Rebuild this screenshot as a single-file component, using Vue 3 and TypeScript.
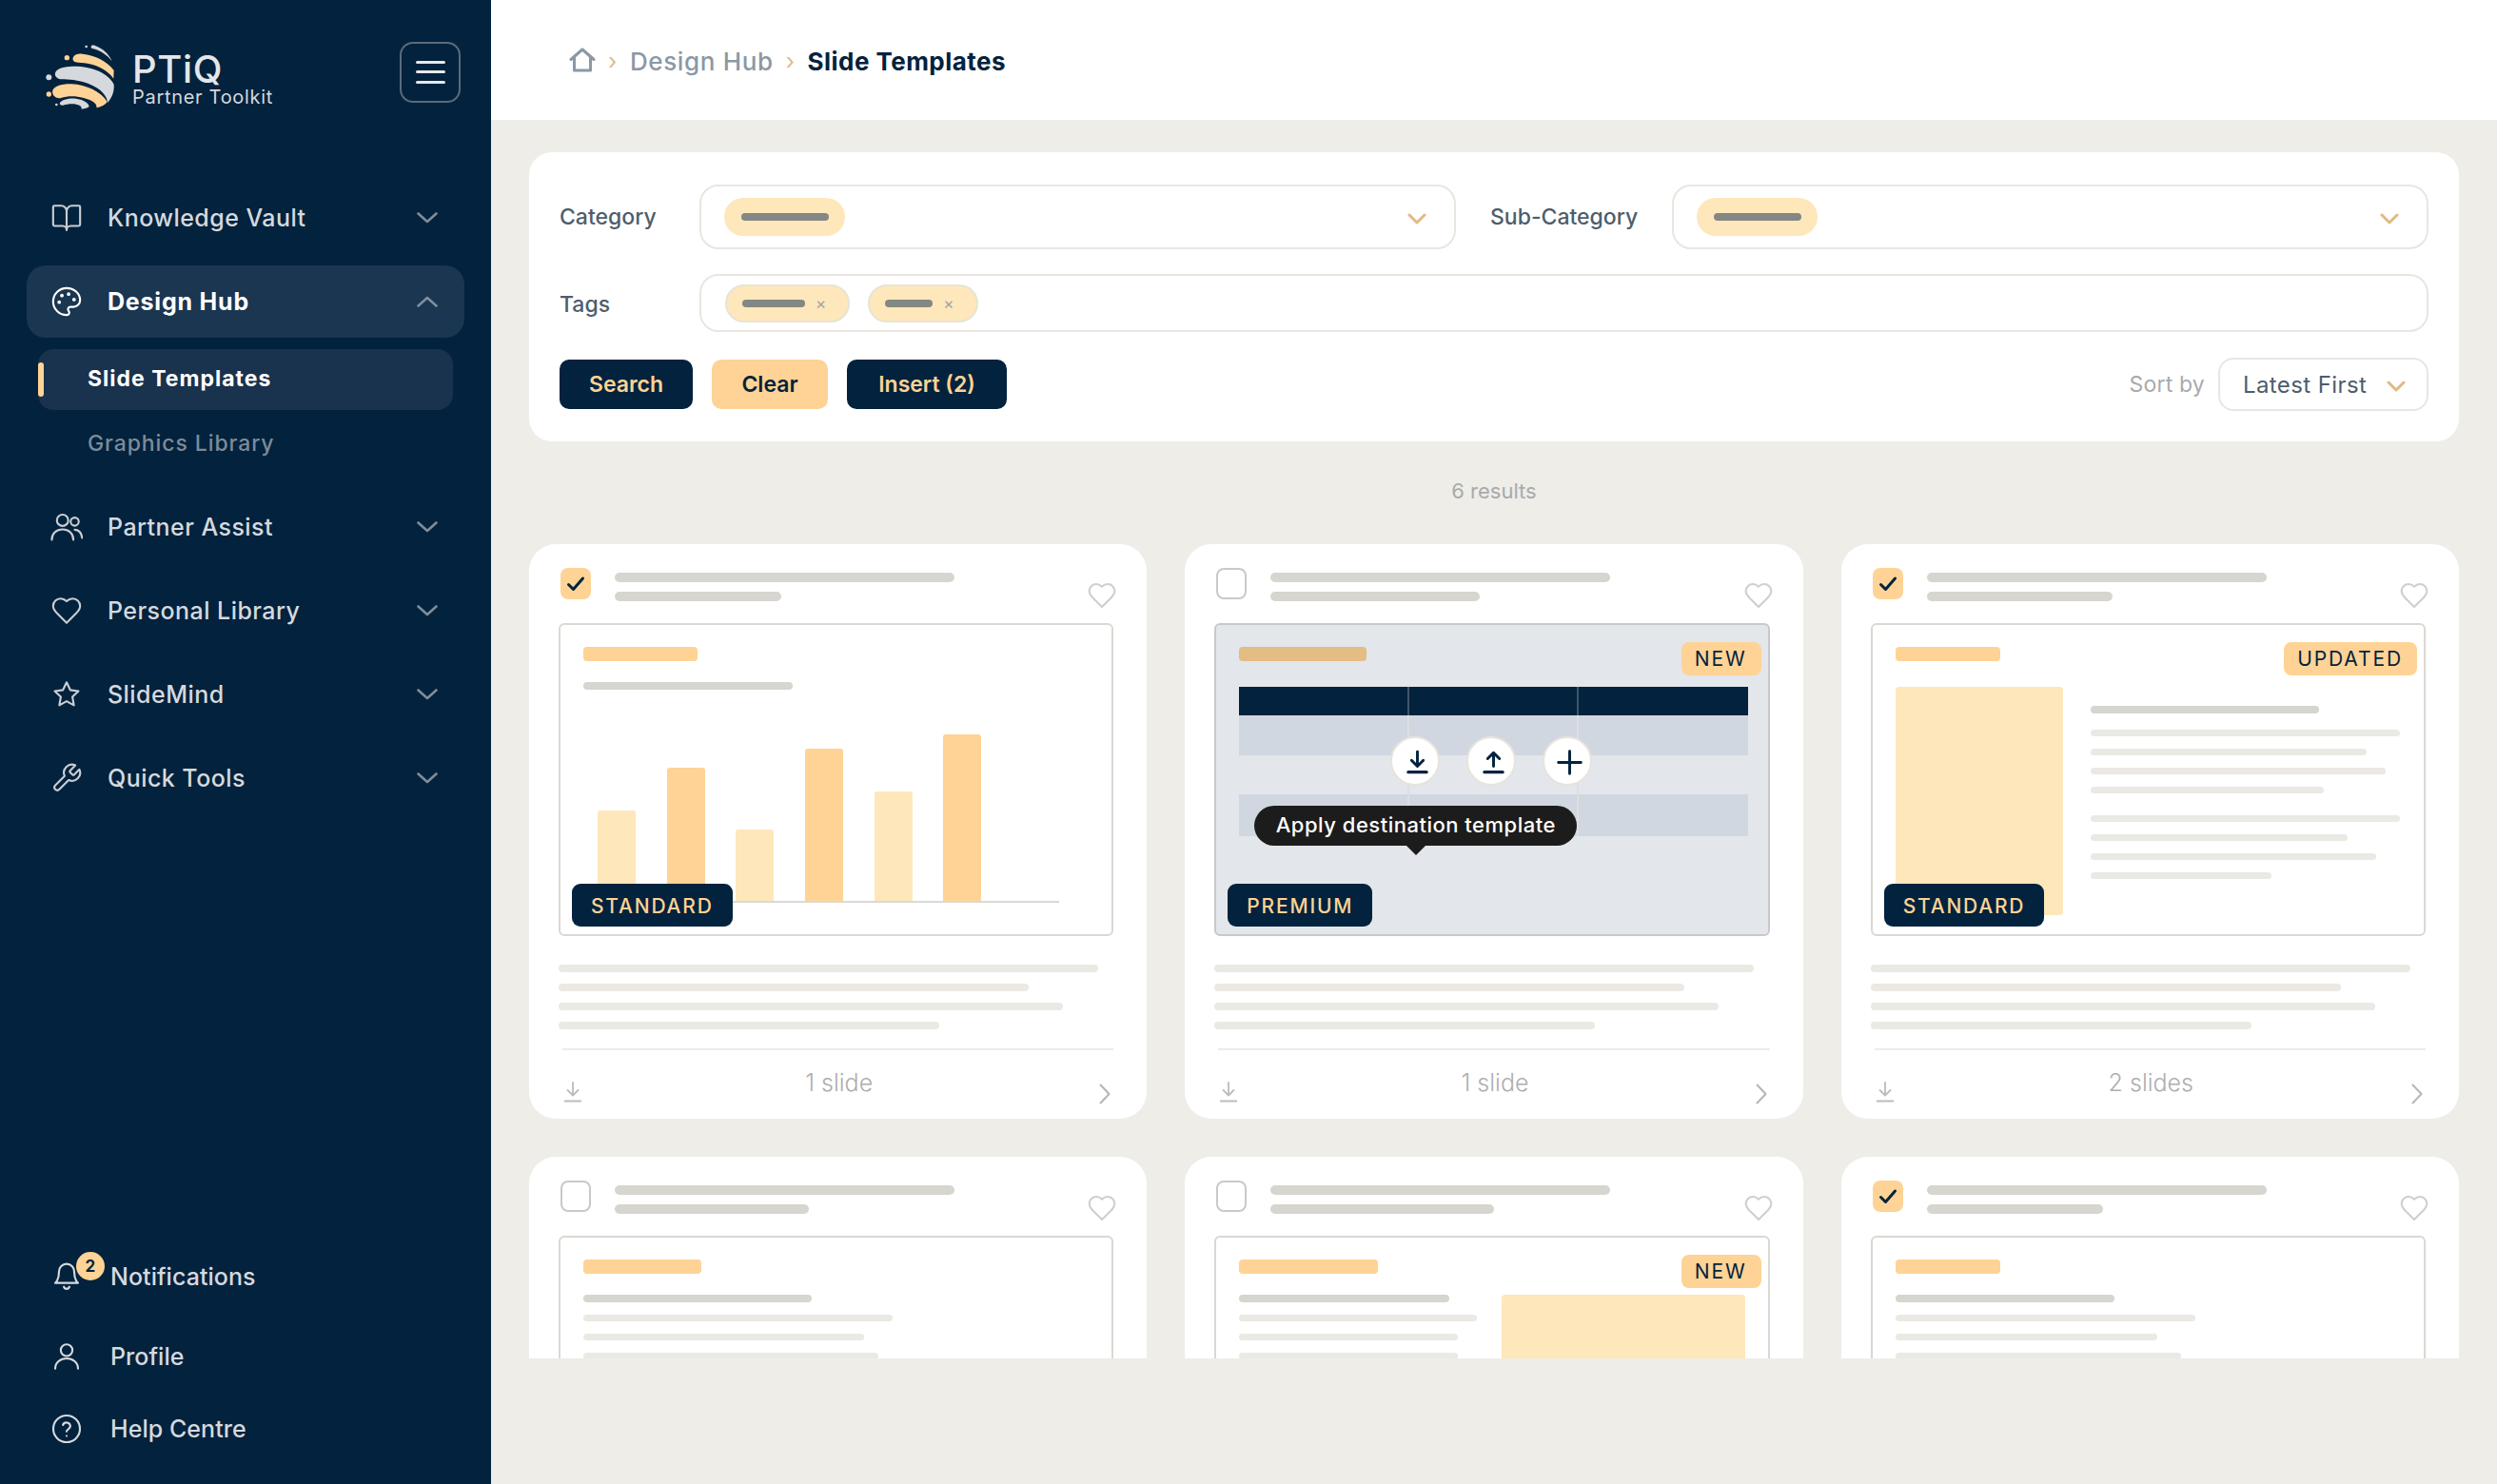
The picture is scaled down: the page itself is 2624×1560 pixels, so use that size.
<script setup lang="ts">
import { computed } from 'vue';

interface NavItem { label: string; icon: string; open?: boolean }
interface Card {
  checked: boolean;
  titleW: number[];
  kind: 'chart' | 'table' | 'doc' | 'text' | 'split';
  accentW: number;
  corner?: string;
  tier?: string;
  slides?: string;
  grayW?: number;
  lineW?: number[];
  picW?: number;
}

const topNav: NavItem[] = [
  { label: 'Knowledge Vault', icon: 'book' },
  { label: 'Design Hub', icon: 'palette', open: true },
  { label: 'Partner Assist', icon: 'users' },
  { label: 'Personal Library', icon: 'heart' },
  { label: 'SlideMind', icon: 'star' },
  { label: 'Quick Tools', icon: 'wrench' },
];

const bars = [
  { h: 95, light: true },
  { h: 140, light: false },
  { h: 75, light: true },
  { h: 160, light: false },
  { h: 115, light: true },
  { h: 175, light: false },
];

// second row is cut off by the scroll area, so those cards have no footer
const cards: Card[] = [
  { checked: true, titleW: [357, 175], kind: 'chart', accentW: 120, tier: 'STANDARD', slides: '1 slide', grayW: 220 },
  { checked: false, titleW: [357, 220], kind: 'table', accentW: 134, corner: 'NEW', tier: 'PREMIUM', slides: '1 slide' },
  { checked: true, titleW: [357, 195], kind: 'doc', accentW: 110, corner: 'UPDATED', tier: 'STANDARD', slides: '2 slides' },
  { checked: false, titleW: [357, 204], kind: 'text', accentW: 124, grayW: 240, lineW: [325, 295, 310, 250] },
  { checked: false, titleW: [357, 235], kind: 'split', accentW: 146, corner: 'NEW', grayW: 221, lineW: [250, 230, 230], picW: 256 },
  { checked: true, titleW: [357, 185], kind: 'text', accentW: 110, grayW: 230, lineW: [315, 275, 300, 240] },
];

const docBlocks = [
  [325, 290, 310, 245],
  [325, 270, 300, 190],
];

const footLines = [567, 494, 530, 400];

const resultLabel = computed(() => `${cards.length} results`);
</script>

<template>
  <div class="app">
    <aside class="sidebar">
      <div class="brand">
        <svg class="logo" viewBox="50 50 225 210" aria-hidden="true">
          <circle cx="120" cy="94" r="8" fill="#fed395" />
          <circle cx="181" cy="59" r="4" fill="#d5d8dc" />
          <circle cx="63" cy="156" r="9" fill="#d5d8dc" />
          <circle cx="63" cy="209" r="8" fill="#fed395" />
          <circle cx="87" cy="242" r="4" fill="#d5d8dc" />
          <path d="M196 58c2-4 8-4 13-2 24 9 42 24 53 49-15-19-35-33-59-39-5-1-8-4-7-8z" fill="#d5d8dc" />
          <path d="M139 94c4-10 16-14 30-12 40 5 78 22 99 52l-1 26c-14-22-46-42-82-48-14-2-28-2-38-4-6-2-10-8-8-14z" fill="#fed395" />
          <path d="M83 142c4-12 20-18 46-20 58-4 118 16 139 56 2 22-6 42-20 58 0-18-18-44-60-60-34-12-64-14-84-14-12 0-24-8-21-20z" fill="#d5d8dc" />
          <path d="M75 197c5-13 28-21 60-20 46 2 92 24 112 56-5 8-16 15-34 19 4-12-12-24-40-31-26-7-52-6-72 0-12 3-30-6-26-24z" fill="#fed395" />
          <path d="M98 236c8-10 32-16 54-12 20 3 36 12 38 24-4 4-14 7-24 8 2-9-10-16-30-16-10 0-20 2-28 4-6 1-13-2-10-8z" fill="#d5d8dc" />
        </svg>
        <div class="brand-text">
          <div class="brand-name">PTiQ</div>
          <div class="brand-sub">Partner Toolkit</div>
        </div>
        <button class="burger" aria-label="Menu">
          <span></span><span></span><span></span>
        </button>
      </div>

      <nav class="nav">
        <template v-for="item in topNav" :key="item.label">
          <div class="nav-row" :class="{ open: item.open }">
            <svg class="nav-icon" viewBox="0 0 24 24">
              <template v-if="item.icon === 'book'">
                <path d="M12 7v14" />
                <path d="M3 18a1 1 0 0 1-1-1V4a1 1 0 0 1 1-1h5a4 4 0 0 1 4 4 4 4 0 0 1 4-4h5a1 1 0 0 1 1 1v13a1 1 0 0 1-1 1h-6a3 3 0 0 0-3 3 3 3 0 0 0-3-3z" />
              </template>
              <template v-else-if="item.icon === 'palette'">
                <path d="M12 22a1 1 0 0 1 0-20 10 9 0 0 1 10 9 5 5 0 0 1-5 5h-2.25a1.75 1.75 0 0 0-1.4 2.8l.3.4a1.75 1.75 0 0 1-1.4 2.8z" />
                <circle cx="13.5" cy="6.5" r=".6" />
                <circle cx="17.5" cy="10.5" r=".6" />
                <circle cx="6.5" cy="12.5" r=".6" />
                <circle cx="8.5" cy="7.5" r=".6" />
              </template>
              <template v-else-if="item.icon === 'users'">
                <circle cx="9" cy="7" r="4.2" />
                <circle cx="18" cy="8" r="3" />
                <path d="M1 21.5c0-4.6 3.4-7.7 8-7.7s8 3.1 8 7.7" />
                <path d="M18 14c3 0 5 2.5 5.5 6" />
              </template>
              <path v-else-if="item.icon === 'heart'" d="M19 14c1.49-1.46 3-3.21 3-5.5A5.5 5.5 0 0 0 16.5 3c-1.76 0-3 .5-4.5 2-1.5-1.5-2.74-2-4.5-2A5.5 5.5 0 0 0 2 8.5c0 2.3 1.5 4.05 3 5.5l7 7Z" />
              <path v-else-if="item.icon === 'star'" d="M12 3l2.7 5.7 6.1.8-4.5 4.3 1.1 6.2-5.4-3-5.4 3 1.1-6.2-4.5-4.3 6.1-.8z" />
              <path v-else d="M14.7 6.3a1 1 0 0 0 0 1.4l1.6 1.6a1 1 0 0 0 1.4 0l3.77-3.77a6 6 0 0 1-7.94 7.94l-6.91 6.91a2.12 2.12 0 0 1-3-3l6.91-6.91a6 6 0 0 1 7.94-7.94l-3.76 3.76z" />
            </svg>
            <span class="nav-label">{{ item.label }}</span>
            <svg class="nav-chev" viewBox="0 0 22 12"><path :d="item.open ? 'M1.5 10.5 11 2l9.5 8.5' : 'M1.5 1.5 11 10l9.5-8.5'" /></svg>
          </div>
          <div v-if="item.open" class="subnav">
            <div class="sub-row active"><i class="sub-mark"></i>Slide Templates</div>
            <div class="sub-row">Graphics Library</div>
          </div>
        </template>
      </nav>

      <div class="nav-bottom">
        <div class="bottom-row notif">
          <span class="bell-wrap">
            <svg class="bottom-icon" viewBox="0 0 24 24">
              <path d="M6 8a6 6 0 0 1 12 0c0 7 3 9 3 9H3s3-2 3-9" />
              <path d="M9.8 20a2.3 2.3 0 0 0 4.4 0" />
            </svg>
            <b class="bell-badge">2</b>
          </span>
          <span>Notifications</span>
        </div>
        <div class="bottom-row profile">
          <svg class="bottom-icon" viewBox="0 0 24 24">
            <circle cx="12" cy="7" r="4.6" />
            <path d="M3 21.5c0-4.8 4-8 9-8s9 3.2 9 8" />
          </svg>
          <span>Profile</span>
        </div>
        <div class="bottom-row help">
          <svg class="bottom-icon" viewBox="0 0 24 24">
            <circle cx="12" cy="12" r="10.5" />
            <path d="M9.1 9a3 3 0 0 1 5.8 1c0 2-2.9 2.6-2.9 4" />
            <path d="M12 17.6h.01" />
          </svg>
          <span>Help Centre</span>
        </div>
      </div>
    </aside>

    <main class="main">
      <header class="topbar">
        <svg class="home" viewBox="0 0 28 26"><path d="M2 12.5 14 2l12 10.5" /><path d="M5.5 10v14h17V10" /></svg>
        <span class="crumb-sep">›</span>
        <span class="crumb">Design Hub</span>
        <span class="crumb-sep">›</span>
        <span class="crumb current">Slide Templates</span>
      </header>

      <div class="content">
        <section class="filters">
          <div class="filter-row">
            <label class="flabel">Category</label>
            <div class="select">
              <span class="pill"><i></i></span>
              <svg class="chev" viewBox="0 0 20 12"><path d="M2 2l8 8 8-8" /></svg>
            </div>
            <label class="flabel sub">Sub-Category</label>
            <div class="select">
              <span class="pill"><i></i></span>
              <svg class="chev" viewBox="0 0 20 12"><path d="M2 2l8 8 8-8" /></svg>
            </div>
          </div>
          <div class="filter-row tags-row">
            <label class="flabel">Tags</label>
            <div class="tags">
              <span class="tag"><i class="w1"></i><em>×</em></span>
              <span class="tag"><i class="w2"></i><em>×</em></span>
            </div>
          </div>
          <div class="actions">
            <button class="btn dark search">Search</button>
            <button class="btn light">Clear</button>
            <button class="btn dark insert">Insert (2)</button>
            <span class="sort-label">Sort by</span>
            <div class="sort">
              <span>Latest First</span>
              <svg class="chev" viewBox="0 0 20 12"><path d="M2 2l8 8 8-8" /></svg>
            </div>
          </div>
        </section>

        <div class="results">{{ resultLabel }}</div>

        <section class="grid">
          <article v-for="(card, i) in cards" :key="i" class="card">
            <div class="card-head">
              <span class="check" :class="{ on: card.checked }">
                <svg v-if="card.checked" viewBox="0 0 20 20"><path d="M2.5 10.5 7.5 15.5 17.5 4" /></svg>
              </span>
              <div class="card-title">
                <i :style="{ width: card.titleW[0] + 'px' }"></i>
                <i :style="{ width: card.titleW[1] + 'px' }"></i>
              </div>
              <svg class="fav" viewBox="0 0 24 24"><path d="M19 14c1.49-1.46 3-3.21 3-5.5A5.5 5.5 0 0 0 16.5 3c-1.76 0-3 .5-4.5 2-1.5-1.5-2.74-2-4.5-2A5.5 5.5 0 0 0 2 8.5c0 2.3 1.5 4.05 3 5.5l7 7Z" /></svg>
            </div>

            <div class="thumb" :class="{ hover: card.kind === 'table' }">
              <div class="accent" :style="{ width: card.accentW + 'px' }"></div>

              <template v-if="card.kind === 'chart'">
                <div class="ln gray chart-title" :style="{ width: card.grayW + 'px' }"></div>
                <div class="chart">
                  <div v-for="(b, n) in bars" :key="n" class="bar" :class="{ pale: b.light }" :style="{ height: b.h + 'px' }"></div>
                </div>
              </template>

              <template v-else-if="card.kind === 'table'">
                <div class="table">
                  <div class="t-row t-head"><span></span><span></span><span></span></div>
                  <div class="t-row t-band"><span></span><span></span><span></span></div>
                  <div class="t-row t-plain"><span></span><span></span><span></span></div>
                  <div class="t-row t-band last"><span></span><span></span><span></span></div>
                </div>
                <div class="hover-actions">
                  <button class="round">
                    <svg viewBox="0 0 24 24"><path d="M12 2v13M6.5 10l5.5 5.5 5.500-5.500" /><path class="thick" d="M3.5 21h17" /></svg>
                  </button>
                  <button class="round">
                    <svg viewBox="0 0 24 24"><path d="M12 15.5V3M6.5 8.5 12 3l5.500 5.500" /><path class="thick" d="M3.5 21h17" /></svg>
                  </button>
                  <button class="round">
                    <svg viewBox="0 0 24 24"><path d="M12 1.5v21M1.5 12h21" /></svg>
                  </button>
                </div>
                <div class="tooltip">Apply destination template</div>
              </template>

              <div v-else-if="card.kind === 'doc'" class="doc">
                <div class="doc-pic"></div>
                <div class="doc-lines">
                  <div class="ln gray" style="width: 240px"></div>
                  <div v-for="(block, b) in docBlocks" :key="b" class="doc-block">
                    <div v-for="w in block" :key="w" class="ln" :style="{ width: w + 'px' }"></div>
                  </div>
                </div>
              </div>

              <div v-else-if="card.kind === 'split'" class="split">
                <div class="split-lines">
                  <div class="ln gray" :style="{ width: card.grayW + 'px' }"></div>
                  <div v-for="w in card.lineW" :key="w" class="ln" :style="{ width: w + 'px' }"></div>
                </div>
                <div class="split-pic" :style="{ width: card.picW + 'px' }"></div>
              </div>

              <div v-else class="plain">
                <div class="ln gray" :style="{ width: card.grayW + 'px' }"></div>
                <div v-for="w in card.lineW" :key="w" class="ln" :style="{ width: w + 'px' }"></div>
              </div>

              <span v-if="card.corner" class="corner">{{ card.corner }}</span>
              <span v-if="card.tier" class="tier">{{ card.tier }}</span>
            </div>

            <div class="desc">
              <i v-for="w in footLines" :key="w" :style="{ width: w + 'px' }"></i>
            </div>
            <div v-if="card.slides" class="card-foot">
              <svg class="dl" viewBox="0 0 18 22"><path d="M9 1v13M3.5 9 9 14.5 14.5 9" /><path d="M0 20.5h18" /></svg>
              <span class="slides">{{ card.slides }}</span>
              <svg class="go" viewBox="0 0 12 22"><path d="M1.5 1.5 10.5 11l-9 9.500" /></svg>
            </div>
          </article>
        </section>
      </div>
    </main>
  </div>
</template>

<style>
html, body { margin: 0; background: #eeede8; }
</style>

<style scoped>
* { box-sizing: border-box; }
.app {
  display: flex;
  width: 2624px;
  height: 1560px;
  overflow: hidden;
  font-family: Inter, "Noto Sans", sans-serif;
  background: #eeede8;
}

/* sidebar */
.sidebar {
  width: 516px;
  flex: none;
  display: flex;
  flex-direction: column;
  background: #02223d;
  color: #d5d9de;
}
.brand {
  display: flex;
  align-items: center;
  height: 63px;
  margin-top: 44px;
  padding-left: 47px;
}
.logo { width: 75px; height: 70px; flex: none; margin-top: 10px; }
.brand-text { margin-left: 17px; width: 281px; margin-top: 16px; }
.brand-name {
  font-size: 40px;
  line-height: 36px;
  font-weight: 500;
  letter-spacing: .6px;
  color: #e4e6e9;
}
.brand-sub {
  font-size: 20px;
  line-height: 22px;
  letter-spacing: .7px;
  color: #d5d9de;
}
.burger {
  flex: none;
  width: 64px;
  height: 64px;
  display: flex;
  flex-direction: column;
  align-items: center;
  justify-content: center;
  gap: 7.5px;
  background: none;
  border: 2px solid #5a6b7b;
  border-radius: 14px;
  padding: 0;
}
.burger span { width: 31px; height: 3px; background: #e6e8ea; border-radius: 2px; }

.nav {
  display: flex;
  flex-direction: column;
  margin-top: 84px;
  padding: 0 28px;
  gap: 12px;
}
.nav-row {
  display: flex;
  align-items: center;
  height: 76px;
  width: 460px;
  padding-left: 25px;
  border-radius: 20px;
  font-size: 25px;
  font-weight: 500;
  letter-spacing: .45px;
}
.nav-row.open { background: #1a3650; color: #fff; font-weight: 700; letter-spacing: .8px; }
.nav-icon {
  width: 34px;
  height: 34px;
  flex: none;
  fill: none;
  stroke: #c9cdd2;
  stroke-width: 1.5;
  stroke-linecap: round;
  stroke-linejoin: round;
}
.open .nav-icon { stroke: #fff; }
.nav-label { margin-left: 26px; flex: 1; }
.nav-chev {
  width: 22px;
  height: 12px;
  margin-right: 28px;
  fill: none;
  stroke: #7f8d9a;
  stroke-width: 2.6;
  stroke-linecap: round;
  stroke-linejoin: round;
}
.subnav {
  display: flex;
  flex-direction: column;
  gap: 2px;
  padding-left: 12px;
  margin-bottom: 7px;
}
.sub-row {
  position: relative;
  display: flex;
  align-items: center;
  width: 436px;
  height: 64px;
  padding: 2px 0 0 52px;
  font-size: 23px;
  font-weight: 500;
  letter-spacing: .9px;
  color: #7d8b99;
}
.sub-row.active {
  background: #19324d;
  border-radius: 16px;
  color: #fff;
  font-weight: 700;
  letter-spacing: 1px;
  padding: 0 0 3px 52px;
}
.sub-mark {
  position: absolute;
  left: 0;
  top: 14px;
  width: 6px;
  height: 36px;
  border-radius: 3px;
  background: #fed395;
}

.nav-bottom { margin-top: auto; padding: 0 0 30px 54px; }
.bottom-row {
  display: flex;
  align-items: center;
  height: 56px;
  font-size: 25px;
  font-weight: 500;
  letter-spacing: .05px;
  color: #d5d9de;
}
.bottom-row.profile { margin-top: 28px; }
.bottom-row.help { margin-top: 20px; }
.bottom-row > span:last-child { margin-left: 30px; }
.bottom-icon {
  width: 32px;
  height: 32px;
  flex: none;
  fill: none;
  stroke: #d5d9de;
  stroke-width: 1.6;
  stroke-linecap: round;
  stroke-linejoin: round;
}
.bell-wrap { position: relative; display: flex; flex: none; }
.bell-badge {
  position: absolute;
  left: 26px;
  top: -10px;
  width: 30px;
  height: 30px;
  border-radius: 50%;
  background: #fed395;
  color: #02223d;
  font-size: 17px;
  line-height: 30px;
  text-align: center;
}

/* main */
.main { flex: 1; min-width: 0; display: flex; flex-direction: column; }
.topbar {
  flex: none;
  height: 126px;
  background: #fff;
  display: flex;
  align-items: center;
  padding: 3px 0 0 82px;
  font-size: 26px;
  font-weight: 500;
  letter-spacing: .65px;
}
.home {
  width: 28px;
  height: 26px;
  margin-top: -3px;
  fill: none;
  stroke: #8b98a5;
  stroke-width: 3;
  stroke-linejoin: round;
  stroke-linecap: round;
}
.crumb-sep { color: #dfba82; margin: 0 13px; font-size: 24px; font-weight: 400; }
.crumb { color: #8b98a5; }
.crumb.current { color: #02223d; font-weight: 700; letter-spacing: .45px; }

.content {
  height: 1302px;
  overflow: hidden;
  padding: 34px 40px 0;
}
.filters {
  background: #fff;
  border-radius: 24px;
  padding: 34px 32px 32px;
  height: 304px;
}
.filter-row { display: flex; align-items: center; height: 68px; }
.flabel {
  width: 147px;
  flex: none;
  font-size: 23px;
  font-weight: 500;
  color: #4e5d6c;
}
.flabel.sub { width: 191px; margin-left: 36px; }
.select {
  flex: 1;
  height: 68px;
  display: flex;
  align-items: center;
  justify-content: space-between;
  padding: 0 29px 0 24px;
  border: 2px solid #e9e6e0;
  border-radius: 20px;
}
.pill {
  display: flex;
  align-items: center;
  justify-content: center;
  width: 127px;
  height: 40px;
  border-radius: 20px;
  background: #fee7ba;
}
.pill i { width: 92px; height: 8px; border-radius: 4px; background: #848784; }
.chev {
  width: 20px;
  height: 12px;
  margin-top: 3px;
  flex: none;
  fill: none;
  stroke: #dfba82;
  stroke-width: 3;
  stroke-linecap: round;
  stroke-linejoin: round;
}
.tags-row { height: 61px; margin-top: 26px; }
.tags-row .flabel { padding-top: 2px; }
.tags {
  flex: 1;
  height: 61px;
  display: flex;
  align-items: center;
  gap: 19px;
  padding-left: 25px;
  border: 2px solid #e9e6e0;
  border-radius: 20px;
}
.tag {
  display: flex;
  align-items: center;
  height: 40px;
  padding: 0 23px 0 16px;
  border-radius: 20px;
  background: #fee7ba;
  border: 2px solid #e9e3d4;
}
.tag i { display: block; height: 8px; border-radius: 4px; background: #848784; }
.tag i.w1 { width: 66px; }
.tag i.w2 { width: 50px; }
.tag em {
  font-style: normal;
  font-size: 17px;
  line-height: 20px;
  color: #a0a2a6;
  margin-left: 11px;
}
.actions { display: flex; align-items: center; height: 56px; margin-top: 27px; }
.btn {
  height: 52px;
  border: none;
  border-radius: 10px;
  font-family: inherit;
  font-size: 23px;
  font-weight: 600;
  padding: 0;
  margin-right: 20px;
}
.btn.dark { background: #02223d; color: #fed395; }
.btn.light { background: #fed395; color: #02223d; width: 122px; }
.btn.search { width: 140px; }
.btn.insert { width: 168px; }
.sort-label {
  margin-left: auto;
  font-size: 23px;
  color: #a9aaac;
  letter-spacing: .2px;
}
.sort {
  width: 221px;
  height: 56px;
  margin-left: 14px;
  display: flex;
  align-items: center;
  justify-content: space-between;
  padding: 0 22px 0 24px;
  border: 2px solid #e9e6e0;
  border-radius: 16px;
  font-size: 24px;
  letter-spacing: .4px;
  color: #4e5d6c;
}
.results {
  height: 108px;
  padding-top: 38px;
  line-height: 28px;
  text-align: center;
  font-size: 22px;
  color: #a9aaac;
}

.grid {
  display: grid;
  grid-template-columns: repeat(3, minmax(0, 1fr));
  gap: 40px;
}
.card {
  height: 604px;
  background: #fff;
  border-radius: 28px;
  padding: 25px 35px 0 31px;
}
.card-head { display: flex; height: 42px; margin-bottom: 16px; }
.check {
  width: 32px;
  height: 33px;
  margin-left: 2px;
  flex: none;
  border-radius: 8px;
  border: 2px solid #c9c9c6;
  display: flex;
  align-items: center;
  justify-content: center;
}
.check.on { background: #fed395; border: none; }
.check svg {
  width: 20px;
  height: 20px;
  fill: none;
  stroke: #02223d;
  stroke-width: 3;
  stroke-linecap: round;
  stroke-linejoin: round;
}
.card-title { margin-left: 25px; padding-top: 5px; flex: 1; }
.card-title i {
  display: block;
  height: 10px;
  border-radius: 5px;
  background: #d7d5cf;
  margin-bottom: 10px;
}
.fav {
  width: 32px;
  height: 32px;
  margin: 13px -4px 0 0;
  flex: none;
  fill: none;
  stroke: #cfcfcc;
  stroke-width: 1.6;
  stroke-linejoin: round;
}
.thumb {
  position: relative;
  height: 329px;
  padding: 23px 24px 0;
  border: 2px solid #dad8d2;
  border-radius: 6px;
  overflow: hidden;
}
.thumb.hover { background: #e3e6ea; border-color: #c7c9ca; }
.accent { height: 15px; border-radius: 4px; background: #fed395; }
.hover .accent { background: #e3bd84; }
.ln { height: 7px; border-radius: 4px; background: #ebe9e3; }
.ln.gray { height: 8px; background: #d7d5cf; }

.chart-title { margin-top: 22px; }
.chart {
  display: flex;
  align-items: flex-end;
  gap: 32.700px;
  width: 485px;
  height: 224px;
  margin-left: 15px;
  border-bottom: 2px solid #dbd9d4;
}
.bar { width: 40px; border-radius: 3px 3px 0 0; background: #fed395; }
.bar.pale { background: #fee7ba; }

.table { margin-top: 27px; width: 535px; }
.t-row { display: grid; grid-template-columns: 179px 178px 178px; }
.t-row span { border-right: 2px solid #dcdfe3; }
.t-row span:last-child { border-right: none; }
.t-head { height: 30px; background: #02223d; }
.t-head span { border-right-color: #3f566c; }
.t-band { height: 42px; background: #d1d7e0; }
.t-plain { height: 41px; }
.t-band.last { height: 44px; }
.hover-actions {
  position: absolute;
  left: 183px;
  top: 117px;
  display: flex;
  gap: 28px;
}
.round {
  width: 52px;
  height: 52px;
  padding: 2px 0 0 5px;
  display: flex;
  align-items: center;
  justify-content: center;
  border-radius: 50%;
  background: #fff;
  border: 2px solid #e8e4dc;
}
.round svg {
  width: 27px;
  height: 27px;
  fill: none;
  stroke: #02223d;
  stroke-width: 2.6;
  stroke-linecap: round;
  stroke-linejoin: round;
}
.round svg .thick { stroke-width: 3; }
.tooltip {
  position: absolute;
  left: 40px;
  top: 190px;
  width: 339px;
  height: 42px;
  border-radius: 21px;
  background: #1c1c1c;
  color: #fff;
  font-size: 22px;
  font-weight: 500;
  letter-spacing: .5px;
  line-height: 40px;
  text-align: center;
}
.tooltip::after {
  content: "";
  position: absolute;
  left: 160px;
  top: 42px;
  border-left: 10px solid transparent;
  border-right: 10px solid transparent;
  border-top: 10px solid #1c1c1c;
}

.doc { display: flex; gap: 29px; margin-top: 27px; }
.doc-pic { width: 176px; height: 240px; flex: none; border-radius: 4px; background: #fee7ba; }
.doc-lines { padding-top: 20px; }
.doc-block { display: flex; flex-direction: column; gap: 13px; margin-top: 17px; }
.doc-block + .doc-block { margin-top: 23px; }

.split { display: flex; justify-content: space-between; margin-top: 22px; }
.split-lines { display: flex; flex-direction: column; gap: 13px; }
.split-pic { height: 200px; flex: none; border-radius: 4px; background: #fee7ba; }
.plain { display: flex; flex-direction: column; gap: 13px; margin-top: 22px; }

.corner {
  position: absolute;
  top: 18px;
  right: 7px;
  height: 35px;
  padding: 0 15px 0 14px;
  border-radius: 8px;
  background: #fed395;
  color: #02223d;
  font-size: 21px;
  line-height: 36px;
  letter-spacing: 1.9px;
}
.tier {
  position: absolute;
  left: 12px;
  bottom: 8px;
  height: 45px;
  padding: 0 20px;
  border-radius: 9px;
  background: #02223d;
  color: #fed395;
  font-size: 21px;
  font-weight: 500;
  line-height: 47px;
  letter-spacing: 1.8px;
}

.desc { margin-top: 30px; display: flex; flex-direction: column; gap: 12px; }
.desc i { display: block; height: 8px; border-radius: 4px; background: #ebe9e3; }
.card-foot {
  display: flex;
  justify-content: space-between;
  margin: 20px 0 0 4px;
  padding: 0 3px 0 2px;
  height: 60px;
  border-top: 2px solid #ececE8;
}
.dl {
  width: 18px;
  height: 22px;
  margin-top: 33px;
  fill: none;
  stroke: #bcbcb9;
  stroke-width: 1.8;
  stroke-linecap: round;
  stroke-linejoin: round;
}
.slides {
  margin: 19px 3px 0 0;
  font-size: 25px;
  line-height: 30px;
  font-weight: 300;
  color: #aeaeb0;
}
.go {
  width: 12px;
  height: 22px;
  margin-top: 35px;
  fill: none;
  stroke: #b5b5b3;
  stroke-width: 2;
  stroke-linecap: round;
  stroke-linejoin: round;
}
</style>
